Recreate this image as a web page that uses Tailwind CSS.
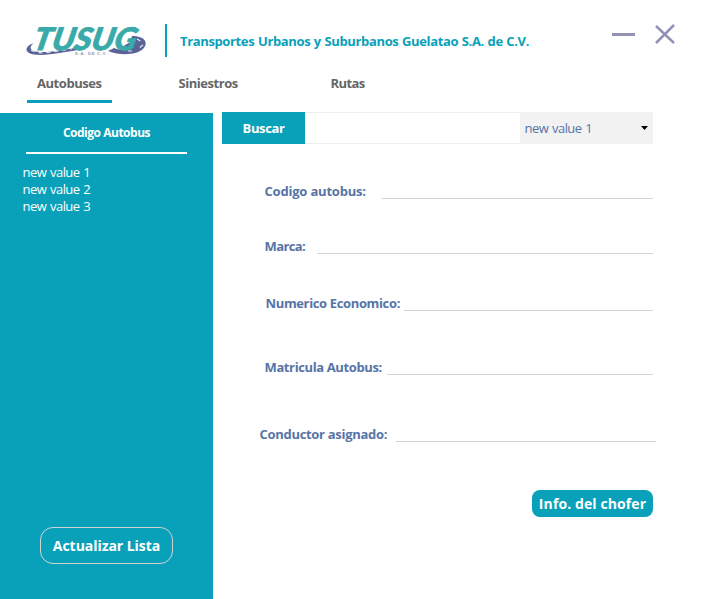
<!DOCTYPE html>
<html lang="es">
<head>
<meta charset="utf-8">
<title>Transportes Urbanos y Suburbanos Guelatao</title>
<script src="https://cdn.jsdelivr.net/npm/@tailwindcss/browser@4"></script>
</head>
<body class="flex h-[599px] w-[705px] flex-col overflow-hidden bg-white font-['Open_Sans','Noto_Sans',sans-serif] text-[13px] leading-[18px] whitespace-nowrap">
<header class="flex h-[72px] shrink-0 items-start">
  <svg class="ml-[24px] mt-[23px] h-[36px] w-[124px] overflow-visible" viewBox="24 23 124 36">
    <path d="M34 43C27 45 24 50 29 53C40 58 62 52 78 50L76 48C60 50 43 54 34 51C29 49 30 46 34 43Z" fill="#596396"/>
    <path d="M132 36C145 36 149 43 143 49C136 55 121 56 108 51L114 48C122 51 132 51 136 47C139 43 136 40 131 39Z" fill="#596396"/>
    <path d="M122 47L137 38L143 47L132 53Z" fill="#596396"/>
    <path d="M31 50Q38 54 48 52.5T72 49M137 39L142 42M143 45L139 48M132 51L125 51" stroke="#e3e8ef" stroke-width="1.2" stroke-dasharray="4 4" fill="none"/>
    <g transform="translate(35 50) skewX(-12)">
      <text x="-3" y="0" textLength="103" lengthAdjust="spacingAndGlyphs" font-family="Lato, sans-serif" font-size="31" font-weight="900" font-style="italic" fill="#39aaa9" stroke="#39aaa9" stroke-width="0.8" stroke-linejoin="round">TUSUG</text>
    </g>
    <text x="75" y="54.5" textLength="32" font-family="Liberation Sans, sans-serif" font-size="4" font-weight="700" fill="#8b91aa">S.A. DE C.V.</text>
  </svg>
  <div class="ml-[17px] mt-[24px] h-[33px] w-[2px] bg-[#08a1b9]"></div>
  <h1 class="ml-[13px] mt-[32px] w-[430px] font-bold tracking-[-0.36px] text-[#08a1b9] [word-spacing:0.6px]">Transportes Urbanos y Suburbanos Guelatao S.A. de C.V.</h1>
  <svg class="ml-[2px] mt-[33px] h-[3px] w-[23px] shrink-0" viewBox="0 0 23 3"><path d="M0 1.5H23" stroke="#9192b5" stroke-width="3"/></svg>
  <svg class="ml-[20px] mt-[24px] h-[21px] w-[20px] shrink-0" viewBox="0 0 20 21"><path d="M1 2L19 19M19 1L1 19" stroke="#9192b5" stroke-width="2.5"/></svg>
</header>
<nav class="flex h-[40px] shrink-0 items-start pl-[27px] font-bold tracking-[-0.45px] text-[#666]">
  <div class="h-[31px] w-[85px] border-b-3 border-[#08a1b9] pt-[2px] pl-[10px]">Autobuses</div>
  <div class="ml-[66.5px] mt-[2px] w-[152px]">Siniestros</div>
  <div class="mt-[2px] tracking-[-0.6px]">Rutas</div>
</nav>
<main class="flex h-[487px]">
  <aside class="mt-px flex w-[213px] shrink-0 flex-col bg-[#08a1b9] text-white">
    <div class="mx-[26px] h-[41px] border-b-2 border-white pt-[11px] text-center text-[12px] font-bold tracking-[-0.48px]">Codigo Autobus</div>
    <ul class="mt-[10px] pl-[22.5px] leading-[17px] tracking-[-0.55px] [word-spacing:1px]"><li>new value 1</li><li>new value 2</li><li>new value 3</li></ul>
    <button class="mt-auto mb-[35px] ml-[40px] flex h-[37px] w-[133px] items-center justify-center rounded-[13px] border border-[#d3d3d3] text-[14px] font-bold tracking-[-0.05px]">Actualizar Lista</button>
  </aside>
  <section class="ml-[9px] w-[434px] text-[#5674a6]">
    <div class="flex h-[32px] w-[431px]">
      <button class="w-[83px] bg-[#08a1b9] font-bold tracking-[-0.4px] text-white">Buscar</button>
      <div class="w-[215px] border-y border-[#ededed]"></div>
      <div class="flex w-[133px] items-center justify-between bg-[#f2f2f2] pr-[5px] pl-[4.5px]"><span class="tracking-[-0.55px] [word-spacing:1px]">new value 1</span><svg class="h-[4px] w-[7px]" viewBox="0 0 7 4"><path d="M0 0H7L3.5 4Z" fill="#000"/></svg></div>
    </div>
    <form class="font-bold leading-[16px]">
      <div class="flex h-[55px] items-end pl-[42.5px]"><label class="w-[117.5px] tracking-[-0.2px]">Codigo autobus:</label><div class="w-[271px] border-b border-[#d3d3d3]"></div></div>
      <div class="flex h-[55px] items-end pl-[42.5px]"><label class="w-[52.5px] tracking-[-0.6px]">Marca:</label><div class="w-[336px] border-b border-[#d3d3d3]"></div></div>
      <div class="flex h-[57px] items-end pl-[43.5px]"><label class="w-[138.5px] tracking-[-0.36px]">Numerico Economico:</label><div class="w-[249px] border-b border-[#d3d3d3]"></div></div>
      <div class="flex h-[64px] items-end pl-[42.5px]"><label class="w-[122.5px] tracking-[-0.38px]">Matricula Autobus:</label><div class="w-[266px] border-b border-[#d3d3d3]"></div></div>
      <div class="flex h-[67px] items-end pl-[37.5px]"><label class="w-[136.5px] tracking-[-0.3px]">Conductor asignado:</label><div class="w-[260px] border-b border-[#d3d3d3]"></div></div>
    </form>
    <button class="mt-[48px] ml-[310px] flex h-[27px] w-[121px] items-center justify-center rounded-[8px] bg-[#08a1b9] text-[14px] font-bold tracking-[0.1px] text-white">Info. del chofer</button>
  </section>
</main>
</body>
</html>
